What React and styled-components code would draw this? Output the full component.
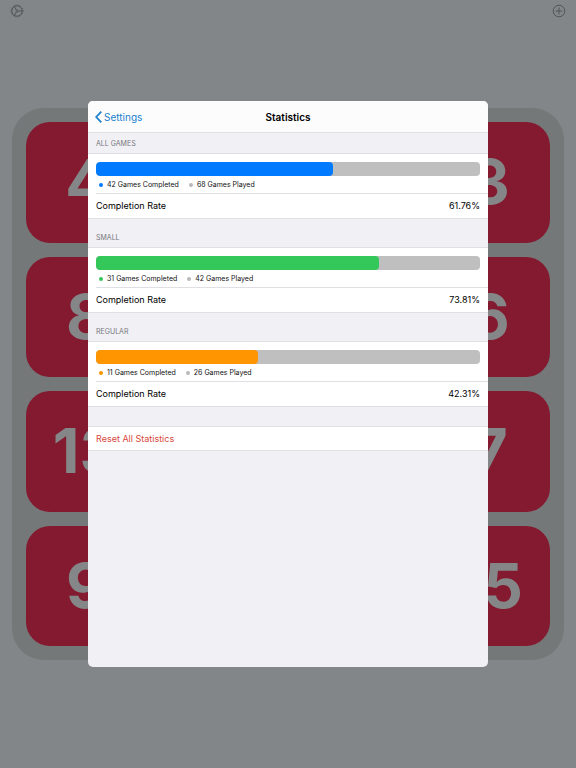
import React from 'react';
import styled, { createGlobalStyle, ThemeProvider } from 'styled-components';

const theme = {
	backdrop: '#838688',
	board: '#757879',
	tile: '#831a30',
	digit: '#858687',
	icon: '#4c5053',
	white: '#ffffff',
	grouped: '#f1f0f5',
	line: '#e0e0e4',
	muted: '#77777c',
	track: '#bfbfbf',
	link: '#1a82cf',
	danger: '#d8483c',
};

const GlobalStyle = createGlobalStyle`
	* {
		box-sizing: border-box;
	}
	body {
		margin: 0;
		font-family: Inter, "Liberation Sans", sans-serif;
		background-color: ${props => props.theme.backdrop};
	}
	button {
		margin: 0;
		padding: 0;
		border: 0;
		background: none;
		font: inherit;
		cursor: pointer;
	}
`;

const Page = styled.div`
	position: relative;
	display: flex;
	flex-direction: column;
	min-height: 100vh;
`;

const TopBar = styled.header`
	display: flex;
	justify-content: space-between;
	height: 24px;
	padding: 4px 10px;
	button {
		width: 14px;
		height: 14px;
		color: ${props => props.theme.icon};
	}
	svg {
		display: block;
	}
`;

const GameArea = styled.main`
	flex: 1;
	display: flex;
	align-items: center;
	padding: 0 12px 24px;
`;

const Board = styled.div`
	display: grid;
	grid-template-columns: repeat(4, 1fr);
	gap: 14px;
	width: 100%;
	padding: 14px;
	border-radius: 32px;
	background-color: ${props => props.theme.board};
`;

const Tile = styled.button`
	aspect-ratio: 1;
	&& {
		border-radius: 24px;
		color: ${props => props.theme.digit};
		background-color: ${props => props.theme.tile};
		font-size: 62px;
		font-weight: 700;
		line-height: 62px;
	}
`;

const Overlay = styled.div`
	position: absolute;
	inset: 0;
	display: flex;
	align-items: center;
	justify-content: center;
`;

const Sheet = styled.section`
	width: 100%;
	max-width: 400px;
	min-height: min(566px, 100vh);
	border-radius: 5px;
	overflow: hidden;
	background-color: ${props => props.theme.grouped};
`;

const NavBar = styled.div`
	display: grid;
	grid-template-columns: 1fr auto 1fr;
	align-items: center;
	height: 32px;
	padding: 0 7px;
	background-color: #fcfcfd;
	border-bottom: 1px solid ${props => props.theme.line};
	h1 {
		margin: 0;
		font-size: 10px;
		font-weight: 600;
		line-height: 14px;
	}
`;

const BackButton = styled.button`
	&& {
		display: flex;
		align-items: center;
		gap: 2px;
		justify-self: start;
		color: ${props => props.theme.link};
		font-size: 10px;
		line-height: 14px;
	}
`;

const GroupTitle = styled.h2`
	display: flex;
	align-items: flex-end;
	height: ${props => (props.$first ? '20px' : '28px')};
	margin: 0;
	padding: 0 8px 4px;
	color: ${props => props.theme.muted};
	font-size: 7px;
	font-weight: 400;
	line-height: 10px;
	text-transform: uppercase;
`;

const Rows = styled.div`
	padding-left: 8px;
	background-color: ${props => props.theme.white};
	border-top: 1px solid ${props => props.theme.line};
	border-bottom: 1px solid ${props => props.theme.line};
`;

const ChartRow = styled.div`
	padding: 8px 8px 3px 0;
	border-bottom: 1px solid ${props => props.theme.line};
`;

const Track = styled.div`
	height: 14px;
	border-radius: 4px;
	overflow: hidden;
	background-color: ${props => props.theme.track};
`;

const Fill = styled.div`
	height: 100%;
	border-radius: 4px;
	background-color: ${props => props.$color};
`;

const Legend = styled.ul`
	display: flex;
	gap: 10px;
	margin: 4px 0 0;
	padding: 0 3px;
	list-style: none;
	font-size: 7px;
	font-weight: 400;
	line-height: 10px;
	color: #111;
	li {
		display: flex;
		align-items: center;
		gap: 4px;
	}
`;

const Dot = styled.span`
	width: 4px;
	height: 4px;
	border-radius: 50%;
	background-color: ${props => props.$color};
`;

const ValueRow = styled.div`
	display: flex;
	justify-content: space-between;
	align-items: center;
	height: 24px;
	padding-right: 8px;
	font-size: 9px;
	line-height: 14px;
`;

const ResetButton = styled.button`
	&& {
		display: block;
		width: 100%;
		height: 25px;
		margin-top: 19px;
		padding: 0 8px;
		color: ${props => props.theme.danger};
		background-color: ${props => props.theme.white};
		border-top: 1px solid ${props => props.theme.line};
		border-bottom: 1px solid ${props => props.theme.line};
		font-size: 9px;
		line-height: 14px;
		text-align: left;
	}
`;

// null is a tile that stays covered by the sheet
const tiles = [4, null, null, 3, 8, null, null, 6, 13, null, null, 7, 9, null, null, 15];

const groups = [
	{ name: 'All Games', completed: 42, played: 68, color: '#007aff' },
	{ name: 'Small', completed: 31, played: 42, color: '#34c759' },
	{ name: 'Regular', completed: 11, played: 26, color: '#ff9500' },
];

const GearIcon = () => (
	<svg width="14" height="14" viewBox="0 0 14 14" fill="none" stroke="currentColor">
		<circle cx="7" cy="7" r="5.2" strokeWidth="0.9" />
		<circle cx="7" cy="7" r="6" strokeWidth="0.8" strokeDasharray="1 1.1" />
		<path d="M4.4 2.7L6.5 6.2M4.4 11.3L6.5 7.8M8.3 7H12" strokeWidth="0.9" />
		<circle cx="7.1" cy="7" r="1.1" strokeWidth="0.8" />
	</svg>
);

const PlusIcon = () => (
	<svg width="14" height="14" viewBox="0 0 14 14" fill="none" stroke="currentColor">
		<circle cx="7" cy="7" r="5.8" strokeWidth="0.9" />
		<path d="M7 4V10M4 7H10" strokeWidth="0.9" strokeLinecap="round" />
	</svg>
);

const BackIcon = () => (
	<svg width="7" height="12" viewBox="0 0 7 12" fill="none" stroke="currentColor">
		<path d="M6.3 0.7L1.2 6L6.3 11.3" strokeWidth="1.8" />
	</svg>
);

const StatGroup = ({ group, first }) => {
	const rate = (group.completed / group.played) * 100;
	return (
		<>
			<GroupTitle $first={first}>{group.name}</GroupTitle>
			<Rows>
				<ChartRow>
					<Track>
						<Fill $color={group.color} style={{ width: `${rate}%` }} />
					</Track>
					<Legend>
						<li><Dot $color={group.color} />{`${group.completed} Games Completed`}</li>
						<li><Dot $color="#b9b9bb" />{`${group.played} Games Played`}</li>
					</Legend>
				</ChartRow>
				<ValueRow>
					<span>Completion Rate</span>
					<span>{`${rate.toFixed(2)}%`}</span>
				</ValueRow>
			</Rows>
		</>
	);
};

const App = () => (
	<ThemeProvider theme={theme}>
		<GlobalStyle />
		<Page>
			<TopBar>
				<button type="button" aria-label="Settings"><GearIcon /></button>
				<button type="button" aria-label="New game"><PlusIcon /></button>
			</TopBar>
			<GameArea>
				<Board>
					{tiles.map((tile, index) => (
						<Tile key={index} type="button">{tile}</Tile>
					))}
				</Board>
			</GameArea>
			<Overlay>
				<Sheet role="dialog" aria-labelledby="sheet-title">
					<NavBar>
						<BackButton type="button"><BackIcon />Settings</BackButton>
						<h1 id="sheet-title">Statistics</h1>
					</NavBar>
					{groups.map((group, index) => (
						<StatGroup key={group.name} group={group} first={index === 0} />
					))}
					<ResetButton type="button">Reset All Statistics</ResetButton>
				</Sheet>
			</Overlay>
		</Page>
	</ThemeProvider>
);

export default App;
